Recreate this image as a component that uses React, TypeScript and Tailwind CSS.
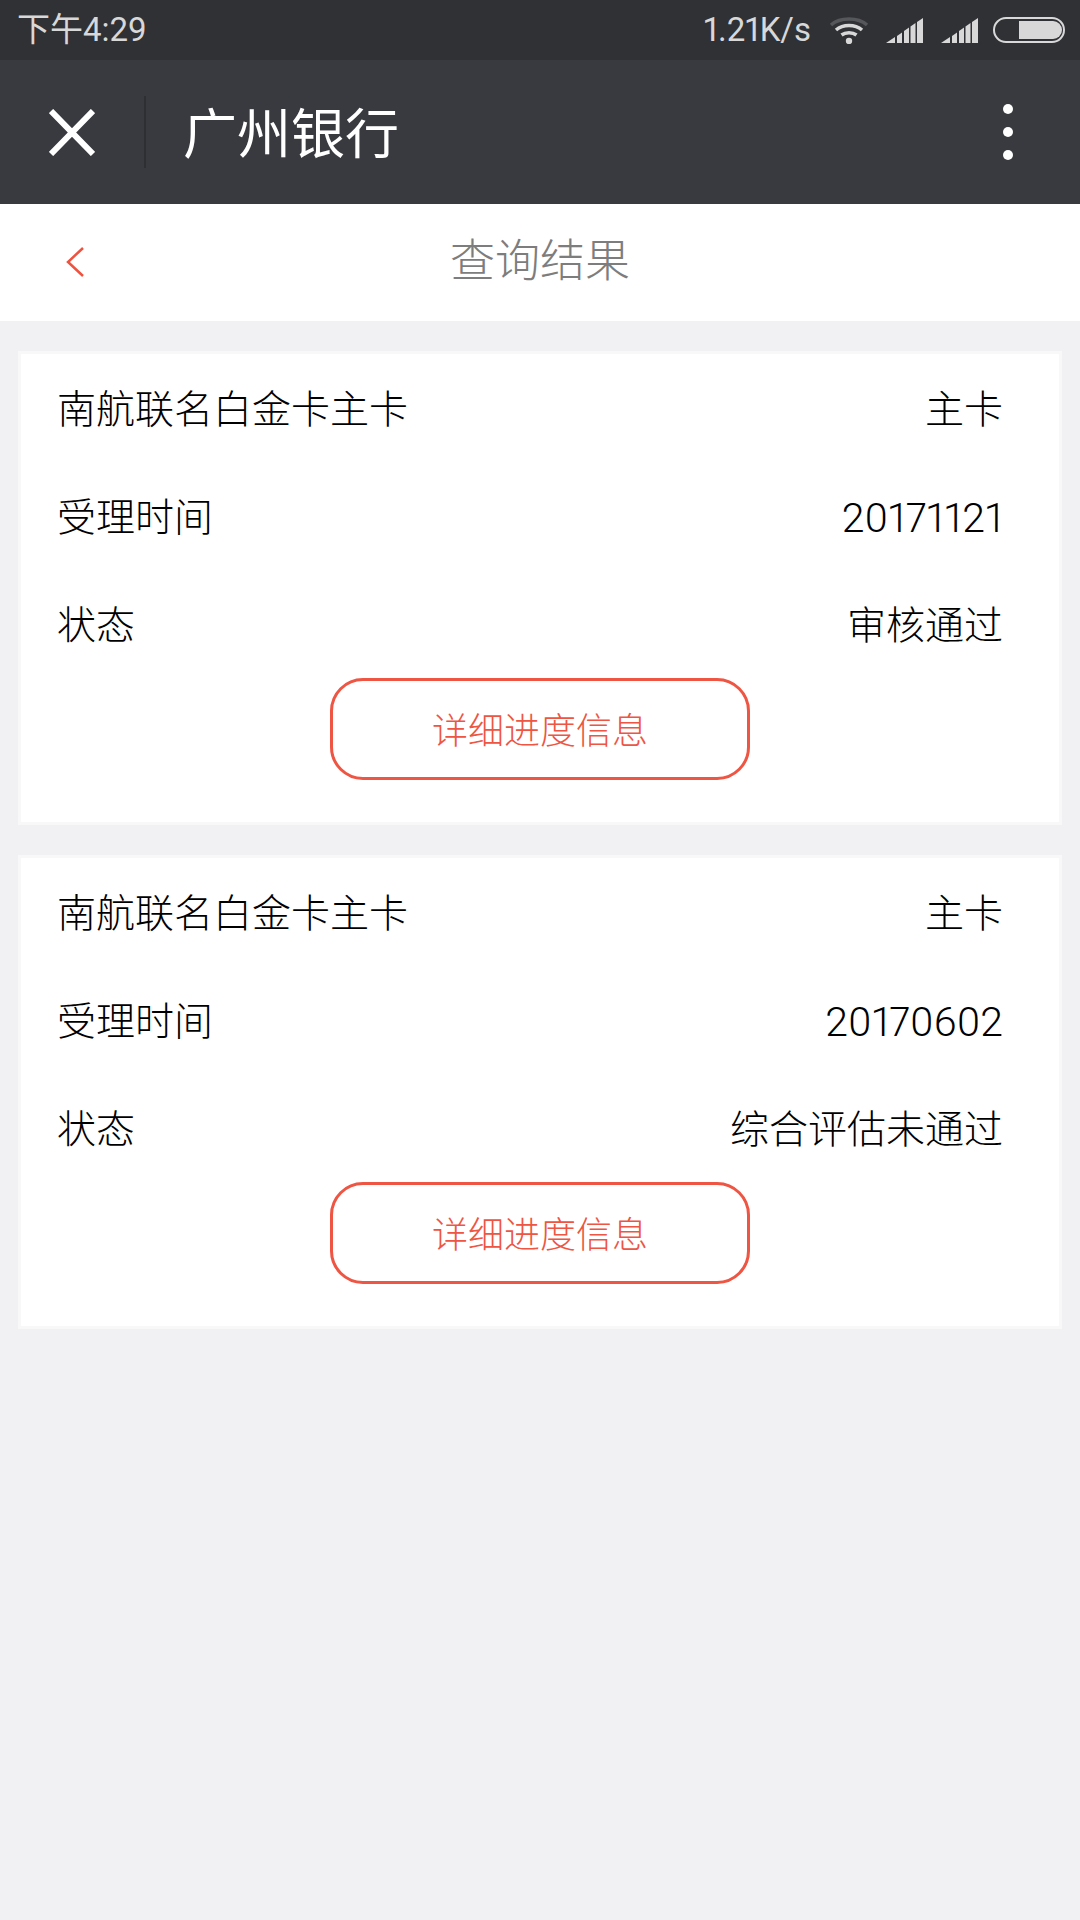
import { Fragment } from 'react'

const font = { fontFamily: 'Roboto, "Noto Sans CJK SC", sans-serif' }

const results = [
  { date: '20171121', status: '审核通过' },
  { date: '20170602', status: '综合评估未通过' },
]

function SignalIcon() {
  return (
    <svg width="37" height="25" viewBox="0 0 37 25" fill="#d8d8d8">
      <path d="M0 25 L9 19 V25 Z" />
      <path d="M11 18 L16 14.5 V25 H11 Z" />
      <path d="M18 13 L23 9.5 V25 H18 Z" />
      <path d="M24.5 8.5 L29.5 5 V25 H24.5 Z" />
      <path d="M31 4 L37 0 V25 H31 Z" />
    </svg>
  )
}

function WifiIcon() {
  return (
    <svg width="40" height="28" viewBox="0 0 40 28" fill="none" strokeWidth="3.5">
      <path d="M2 9 C11 1 29 1 38 9" stroke="#56575b" />
      <path d="M7 14 C14 8 26 8 33 14" stroke="#d8d8d8" />
      <path d="M12.5 19 C16.5 16 23.5 16 27.5 19" stroke="#d8d8d8" />
      <circle cx="20" cy="25" r="3.2" fill="#d8d8d8" />
    </svg>
  )
}

function BatteryIcon() {
  return (
    <div className="flex h-[26px] w-[72px] items-center justify-end rounded-[13px] border-2 border-[#d8d8d8] pr-[1px]">
      <div className="h-[18px] w-[43px] rounded-r-[9px] bg-[#d8d8d8]" />
    </div>
  )
}

function ResultCard({ date, status }: { date: string; status: string }) {
  return (
    <div className="border-[3px] border-[#f8f8f9] bg-white pb-[42px] pl-[36px] pr-[56px]">
      <div className="grid grid-cols-[1fr_auto] text-[39px] font-light text-black proportional-nums">
        <Fragment>
          <div className="flex h-[108px] items-center pt-[5px]">南航联名白金卡主卡</div>
          <div className="flex h-[108px] items-center justify-end pt-[5px]">主卡</div>
        </Fragment>
        <Fragment>
          <div className="flex h-[108px] items-center pt-[5px]">受理时间</div>
          <div className="flex h-[108px] items-center justify-end pt-[5px] text-[41px]">{date}</div>
        </Fragment>
        <Fragment>
          <div className="flex h-[108px] items-center pt-[5px]">状态</div>
          <div className="flex h-[108px] items-center justify-end pt-[5px]">{status}</div>
        </Fragment>
      </div>
      <button className="ml-[273px] flex h-[102px] w-[420px] items-center justify-center rounded-[33px] border-[3px] border-[#ee5543] pt-[5px] text-[36px] font-light text-[#ee5543]">
        详细进度信息
      </button>
    </div>
  )
}

export default function App() {
  return (
    <div className="flex min-h-[1920px] flex-col bg-[#f1f1f3]" style={font}>
      {/* Status bar */}
      <div className="flex h-[60px] items-center justify-between bg-[#303135] pl-[17px] pr-[15px] text-[33px] text-[#d8d8d8] proportional-nums">
        <span>下午4:29</span>
        <div className="flex items-center">
          <span>1.21K/s</span>
          <div className="ml-[18px]">
            <WifiIcon />
          </div>
          <div className="ml-[17px]">
            <SignalIcon />
          </div>
          <div className="ml-[18px]">
            <SignalIcon />
          </div>
          <div className="ml-[15px]">
            <BatteryIcon />
          </div>
        </div>
      </div>

      {/* WeChat nav */}
      <div className="flex h-[144px] items-center bg-[#393a3f] pl-[49px] pr-[67px]">
        <svg width="46" height="47" viewBox="0 0 46 47" fill="none" stroke="#fff" strokeWidth="6">
          <path d="M2 2 L44 45 M44 2 L2 45" />
        </svg>
        <div className="ml-[49px] h-[72px] w-[2px] bg-[#2e2f33]" />
        <h1 className="ml-[37px] flex-1 pt-[7px] text-[54px] text-white">广州银行</h1>
        <div className="flex flex-col gap-[13px]">
          <div className="h-[10px] w-[10px] rounded-full bg-white" />
          <div className="h-[10px] w-[10px] rounded-full bg-white" />
          <div className="h-[10px] w-[10px] rounded-full bg-white" />
        </div>
      </div>

      {/* Page title */}
      <div className="grid h-[117px] grid-cols-[1fr_auto_1fr] items-center bg-white pb-[2px] pl-[66px]">
        <svg width="18" height="30" viewBox="0 0 18 30" fill="none" stroke="#ee5340" strokeWidth="2.5">
          <path d="M17 1 L2 15 L17 29" />
        </svg>
        <div className="-ml-[66px] text-center text-[45px] font-light text-[#7d7d7d]">查询结果</div>
        <div />
      </div>

      {/* Results */}
      <div className="flex flex-col gap-[30px] px-[18px] pt-[30px]">
        {results.map((item) => (
          <ResultCard key={item.date} date={item.date} status={item.status} />
        ))}
      </div>
    </div>
  )
}
